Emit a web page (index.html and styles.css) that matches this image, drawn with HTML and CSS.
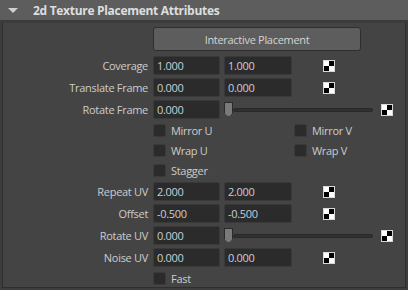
FILE: index.html
```html
<!DOCTYPE html>
<html lang="en">
<head>
    <meta charset="UTF-8" />
    <title>2d Texture Placement Attributes</title>
    <link rel="stylesheet" href="styles.css">
</head>
<body>

<div class="section">
    <div class="section-header">
        <span class="arrow"></span>
        <span class="section-title">2d Texture Placement Attributes</span>
    </div>

    <div class="section-body">
        <div class="row button-row">
            <span></span>
            <button class="wide-button">Interactive Placement</button>
        </div>

        <div class="row">
            <label>Coverage</label>
            <input class="field" value="1.000" />
            <input class="field" value="1.000" />
            <span class="map-btn"></span>
        </div>

        <div class="row">
            <label>Translate Frame</label>
            <input class="field" value="0.000" />
            <input class="field" value="0.000" />
            <span class="map-btn"></span>
        </div>

        <div class="row slider-row">
            <label>Rotate Frame</label>
            <input class="field" value="0.000" />
            <div class="slider">
                <span class="handle"></span>
                <span class="track"></span>
            </div>
            <span class="map-btn"></span>
        </div>

        <div class="row check-row">
            <span></span>
            <div class="check"><span class="box"></span>Mirror U</div>
            <div class="check"><span class="box"></span>Mirror V</div>
        </div>

        <div class="row check-row">
            <span></span>
            <div class="check"><span class="box"></span>Wrap U</div>
            <div class="check"><span class="box"></span>Wrap V</div>
        </div>

        <div class="row check-row">
            <span></span>
            <div class="check"><span class="box"></span>Stagger</div>
        </div>

        <div class="row">
            <label>Repeat UV</label>
            <input class="field" value="2.000" />
            <input class="field" value="2.000" />
            <span class="map-btn"></span>
        </div>

        <div class="row">
            <label>Offset</label>
            <input class="field" value="-0.500" />
            <input class="field" value="-0.500" />
            <span class="map-btn"></span>
        </div>

        <div class="row slider-row">
            <label>Rotate UV</label>
            <input class="field" value="0.000" />
            <div class="slider">
                <span class="handle"></span>
                <span class="track"></span>
            </div>
            <span class="map-btn"></span>
        </div>

        <div class="row">
            <label>Noise UV</label>
            <input class="field" value="0.000" />
            <input class="field" value="0.000" />
            <span class="map-btn"></span>
        </div>

        <div class="row check-row">
            <span></span>
            <div class="check"><span class="box"></span>Fast</div>
        </div>
    </div>
</div>

</body>
</html>
```

FILE: styles.css
```css
* {
    box-sizing: border-box;
}

body {
    margin: 0;
    width: 408px;
    height: 290px;
    overflow: hidden;
    background-color: #3d3d3d;
    font-family: 'Open Sans', 'Liberation Sans', sans-serif;
    font-size: 11px;
    letter-spacing: -0.3px;
    color: #cccccc;
}

.section {
    height: 290px;
    display: flex;
    flex-direction: column;
}

.section-header {
    height: 21px;
    flex: none;
    display: flex;
    align-items: center;
    background-color: #5d5d5d;
    border-bottom: 1px solid #3a3a3a;
    padding-left: 8px;
}

.arrow {
    width: 0;
    height: 0;
    border-left: 5px solid transparent;
    border-right: 5px solid transparent;
    border-top: 5px solid #d0d0d0;
    margin-right: 15px;
}

.section-title {
    font-weight: 700;
    font-size: 12px;
    color: #dedede;
}

.section-body {
    flex: 1;
    margin: 1px 2px 2px 2px;
    border: 1px solid #2e2e2e;
    border-top-color: #3a3a3a;
    background-color: #444444;
    padding-top: 4px;
    display: flex;
    flex-direction: column;
    gap: 3px;
}

.row {
    display: grid;
    grid-template-columns: 146px 67px 68px 12px;
    column-gap: 4px;
    height: 19px;
    align-items: center;
}

.row label {
    text-align: right;
    padding-right: 1px;
}

.button-row {
    height: 24px;
    margin-bottom: 2px;
    grid-template-columns: 146px 208px;
}

.wide-button {
    height: 24px;
    background-color: #5d5d5d;
    border: 1px solid #2f2f2f;
    border-radius: 3px;
    color: #d4d4d4;
    font-family: inherit;
    font-size: 11px;
    letter-spacing: -0.3px;
    padding: 0;
}

.field {
    height: 19px;
    width: 100%;
    background-color: #2b2b2b;
    border: 1px solid #393939;
    border-radius: 2px;
    color: #c4d0dc;
    font-family: inherit;
    font-size: 11px;
    letter-spacing: -0.3px;
    padding: 0 0 0 3px;
}

.map-btn {
    width: 12px;
    height: 12px;
    margin-left: 27px;
    border: 1px solid #d8d8d8;
    background:
        linear-gradient(#000, #000) top right / 50% 50% no-repeat,
        linear-gradient(#000, #000) bottom left / 50% 50% no-repeat,
        #ffffff;
}

.slider-row {
    grid-template-columns: 146px 67px 149px 12px;
}

.slider-row .map-btn {
    margin-left: 4px;
}

.slider {
    display: flex;
    align-items: center;
    height: 19px;
}

.handle {
    width: 9px;
    height: 15px;
    flex: none;
    background-color: #7a7a7a;
    border: 1px solid #2a2a2a;
    clip-path: polygon(0 0, 100% 0, 100% 70%, 50% 100%, 0 70%);
}

.track {
    flex: 1;
    height: 4px;
    background-color: #303030;
    border: 1px solid #2a2a2a;
    border-radius: 2px;
}

.check-row {
    height: 17px;
    grid-template-columns: 146px 137px 100px;
}

.check {
    display: flex;
    align-items: center;
    gap: 5px;
}

.box {
    width: 13px;
    height: 13px;
    background-color: #2b2b2b;
    border: 1px solid #3a3a3a;
    border-radius: 2px;
}
```
